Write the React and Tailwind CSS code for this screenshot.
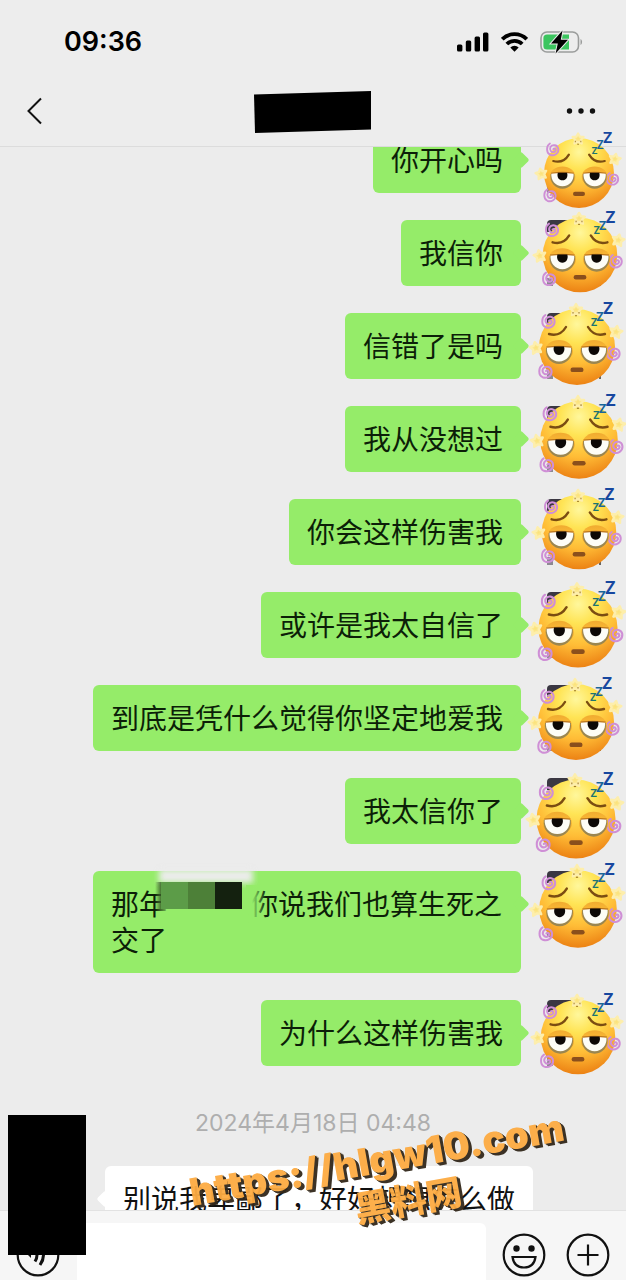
const MESSAGES = [
  { text: '你开心吗', sticker: { x: 5, y: 13, size: 92 } },
  { text: '我信你', sticker: { x: 6, y: 2, size: 98 } },
  { text: '信错了是吗', sticker: { x: 3, y: 1, size: 100 } },
  { text: '我从没想过', sticker: { x: 5, y: 1, size: 102 } },
  { text: '你会这样伤害我', sticker: { x: 5, y: 0, size: 98 } },
  { text: '或许是我太自信了', sticker: { x: 4, y: 3, size: 104 } },
  { text: '到底是凭什么觉得你坚定地爱我', sticker: { x: 2, y: 4, size: 100 } },
  { text: '我太信你了', sticker: { x: 2, y: 8, size: 104 } },
  { text: '那年', rest: '你说我们也算生死之交了', sticker: { x: 4, y: 5, size: 102 } },
  { text: '为什么这样伤害我', sticker: { x: 4, y: 4, size: 98 } }
];

const STAR = 'M0 -6 L2 -2.6 L6 -2.2 L3.2 1 L4 5 L0 3.4 L-4 5 L-3.2 1 L-6 -2.2 L-2 -2.6 Z';
const SWIRL = 'M0 0 C2 -2 4 1 1.6 2.8 C-1.6 4.6 -4.6 1 -3 -2.2 C-1 -5.6 5 -4.8 5.6 0 C6 5 1 7.8 -3.4 6.2 C-8 4 -7.6 -3.6 -3.6 -6';

function Eye({ x }) {
  return (
    <g transform={`translate(${x} 3)`}>
      <ellipse cx="0" cy="1" rx="14" ry="11" fill="url(#lid)" />
      <path d="M-13 -2 C-14 7 -8 14 0 14 C8 14 14 7 13 -2 Z" fill="#9a8650" />
      <path d="M-12 -3 H12 C13 5 7.5 11.5 0 11.5 C-7.5 11.5 -13 5 -12 -3 Z" fill="#fdfdf6" />
      <path d="M-12.5 -2.8 Q0 -4.6 12.5 -2.8" stroke="#b9741c" strokeWidth="1.2" fill="none" />
      <path d="M-5 -3.4 H5 C6.4 1 4 5 0 5 C-4 5 -6.4 1 -5 -3.4 Z" fill="#0d0906" />
    </g>
  );
}

function TiredFace() {
  return (
    <svg viewBox="-50 -50 100 100" className="block size-full overflow-visible" aria-hidden="true">
      <defs>
        <radialGradient id="face" cx="0.5" cy="0.2" r="0.8">
          <stop offset="0" stopColor="#fff79c" />
          <stop offset="0.3" stopColor="#ffe455" />
          <stop offset="0.65" stopColor="#ffbc36" />
          <stop offset="1" stopColor="#ec8214" />
        </radialGradient>
        <radialGradient id="star">
          <stop offset="0" stopColor="#fbe27a" />
          <stop offset="1" stopColor="#fdeea6" />
        </radialGradient>
        <linearGradient id="lid" x1="0" y1="0" x2="0" y2="1">
          <stop offset="0" stopColor="#f0ab30" />
          <stop offset="0.4" stopColor="#fbb935" />
          <stop offset="1" stopColor="#dd9220" />
        </linearGradient>
      </defs>
      <circle r="38" fill="url(#face)" />
      <g fill="url(#star)" stroke="#fdeeac" strokeWidth="2.4" strokeLinejoin="round">
        <path d={STAR} transform="translate(-1 -37)" />
        <path d={STAR} transform="translate(39 -15) rotate(12)" />
        <path d={STAR} transform="translate(-41 1) rotate(-12)" />
      </g>
      <path d="M-4 -35 v1.6 M2 -35 v1.6 M-2 -31.500 q1 1 2 0" stroke="#9a7426" strokeWidth="1" fill="none" />
      <g fill="none" stroke="#cf8fd6" strokeWidth="2" strokeLinecap="round">
        <path d={SWIRL} transform="translate(-28 -26)" />
        <path d={SWIRL} transform="translate(-31 24)" />
        <path d={SWIRL} transform="translate(37 6)" />
      </g>
      <g fill="none" stroke="#7b4d12" strokeWidth="2.400" strokeLinecap="round">
        <path d="M-28 -13 Q-17 -10 -11 -20" />
        <path d="M11 -20 Q17 -10 28 -13" />
      </g>
      <Eye x={-18} />
      <Eye x={17} />
      <rect x="-6.500" y="20.500" width="13" height="4.600" rx="2.200" fill="#8a4f1c" />
      <g className="font-['Inter',sans-serif] font-bold" textAnchor="middle">
        <text x="17" y="-21" fontSize="10" fill="#1d7470">Z</text>
        <text x="23" y="-26" fontSize="12" fill="#19659a">Z</text>
        <text x="31" y="-33" fontSize="16" fill="#17479f">Z</text>
      </g>
    </svg>
  );
}

function Avatar({ sticker }) {
  return (
    <div className="relative size-[66px] shrink-0">
      <div className="flex h-full flex-col justify-between px-1.5">
        <span className="h-3 w-6 rounded-tl-sm bg-[#3a3742]" />
        <span className="flex justify-between">
          <span className="h-2 w-1.5 bg-[#8d8992]" />
          <span className="h-2 w-0.5 bg-[#6a6560]" />
        </span>
      </div>
      <div
        className="absolute z-20 -translate-1/2"
        style={{ left: 33 + sticker.x, top: 33 + sticker.y, width: sticker.size, height: sticker.size }}
      >
        <TiredFace />
      </div>
    </div>
  );
}

// Mosaic over the hidden words, with the smear it leaves on both sides
function Censored() {
  return (
    <span className="relative inline-block h-7 w-[83px] align-middle">
      <span className="absolute -top-6 -left-2 h-3.5 w-[94px] bg-[#ececec] blur-[3px]" />
      <span className="absolute -top-2 -left-3 h-11 w-4 bg-linear-to-r from-transparent to-[#95ec69]" />
      <span className="absolute -top-[11px] -left-3 h-[27px] w-2 bg-linear-to-r from-transparent to-[#2c4a20]" />
      <span className="absolute -top-2 -right-4 h-10 w-5 bg-linear-to-l from-transparent to-[#95ec69] to-70%" />
      <span className="absolute -top-[11px] -left-1.5 flex">
        <span className="size-[27px] bg-[#5c9c48]" />
        <span className="size-[27px] bg-[#4d8038]" />
        <span className="size-[27px] bg-[#14210f]" />
      </span>
    </span>
  );
}

function Message({ message }) {
  return (
    <li className="flex items-start justify-end gap-5">
      <div className="relative max-w-[428px] rounded-md bg-[#95ec69] px-[18px] pt-3.5 pb-4">
        <span className="absolute top-[27px] -right-1.5 size-3 rotate-45 rounded-[2px] bg-[#95ec69]" />
        <p className="relative">
          {message.text}
          {message.rest && <Censored />}
          {message.rest}
        </p>
      </div>
      <Avatar sticker={message.sticker} />
    </li>
  );
}

function StatusBar() {
  return (
    <div className="flex h-[84px] items-center justify-between pr-[43px] pl-16">
      <time className="font-['Inter',sans-serif] text-[27px] font-semibold text-black">09:36</time>
      <div className="flex items-center gap-3">
        <svg width="32" height="20" viewBox="0 0 32 20" aria-label="signal">
          <rect x="0" y="12.5" width="5.4" height="7" rx="1.5" />
          <rect x="8.8" y="8.5" width="5.4" height="11" rx="1.5" />
          <rect x="17.6" y="4.5" width="5.4" height="15" rx="1.5" />
          <rect x="26" y="0.5" width="5.4" height="19" rx="1.5" />
        </svg>
        <svg width="27" height="20" viewBox="0 0 27 20" aria-label="wifi">
          <g fill="none" stroke="#000" strokeWidth="3.8">
            <path d="M1.3 7.2 A17.3 17.3 0 0 1 25.7 7.2" />
            <path d="M5.8 12 A10.9 10.9 0 0 1 21.2 12" />
          </g>
          <path d="M9.3 15.4 A6 6 0 0 1 17.7 15.4 L13.5 19.8 Z" />
        </svg>
        <svg width="43" height="24" viewBox="0 0 43 24" aria-label="battery charging">
          <rect x="1" y="2" width="37.5" height="20" rx="6" fill="none" stroke="#9b9d9c" strokeWidth="1.6" />
          <path d="M7 4.4 H29 V19.6 H7 A3.6 3.6 0 0 1 3.4 16 V8 A3.6 3.6 0 0 1 7 4.4 Z" fill="#3cc55f" />
          <path d="M40.5 9 C42.6 10 42.6 14 40.5 15 Z" fill="#9b9d9c" />
          <path d="M22.5 0.5 L11 13.6 H17.8 L15.6 23.5 L28 9.8 H20.8 Z" fill="#000" stroke="#ececec" strokeWidth="2" paintOrder="stroke" />
        </svg>
      </div>
    </div>
  );
}

function Header() {
  return (
    <header className="relative z-10 shrink-0 border-b border-[#dcdcdc] bg-[#ededed]">
      <StatusBar />
      <div className="flex h-[62px] items-start justify-between pr-[30px] pl-[26px]">
        <button type="button" aria-label="返回" className="mt-3 flex flex-1">
          <svg width="17" height="30" viewBox="0 0 17 30" fill="none" stroke="#111" strokeWidth="2">
            <path d="M15 2.5 L2.5 15 L15 27.5" />
          </svg>
        </button>
        <svg width="120" height="44" viewBox="0 0 120 44" className="mt-1.5" aria-hidden="true">
          <path d="M3 4.5 L120 1 L120 39.500 L4 43 Z" />
        </svg>
        <button type="button" aria-label="更多" className="mt-6 flex flex-1 justify-end">
          <svg width="30" height="6" viewBox="0 0 30 6" fill="#111">
            <circle cx="3.500" cy="3" r="2.700" />
            <circle cx="15" cy="3" r="2.700" />
            <circle cx="26.500" cy="3" r="2.700" />
          </svg>
        </button>
      </div>
    </header>
  );
}

function Footer() {
  return (
    <footer className="relative z-10 h-[70px] shrink-0 overflow-hidden border-t border-[#e2e2e2] bg-[#f6f6f6] pt-3">
      <div className="flex h-16 items-center pr-4 pl-4">
        <button type="button" aria-label="语音">
          <svg width="44" height="44" viewBox="0 0 44 44" fill="none" stroke="#111" strokeWidth="2.200">
            <circle cx="22" cy="22" r="20.300" />
            <path d="M19 15.500 Q23 22 19 28.500 M24 12 Q31 22 24 32" strokeWidth="3" />
            <path d="M11 21 L15 18 V25 Z" fill="#111" stroke="none" />
          </svg>
        </button>
        <input type="text" aria-label="消息" className="ml-[17px] h-full min-w-0 flex-1 rounded-md bg-white px-4 outline-none" />
        <button type="button" aria-label="表情" className="ml-4">
          <svg width="44" height="44" viewBox="0 0 44 44" fill="none" stroke="#111" strokeWidth="2.200">
            <circle cx="22" cy="22" r="20.300" />
            <circle cx="14.500" cy="15.500" r="3.200" fill="#111" stroke="none" />
            <circle cx="29.500" cy="15.500" r="3.200" fill="#111" stroke="none" />
            <path d="M10.500 24 H33.500 C32.500 31 28 34.500 22 34.500 C16 34.500 11.500 31 10.500 24 Z" />
          </svg>
        </button>
        <button type="button" aria-label="添加" className="ml-5">
          <svg width="44" height="44" viewBox="0 0 44 44" fill="none" stroke="#111" strokeWidth="2.200">
            <circle cx="22" cy="22" r="20.300" />
            <path d="M22 11.500 V32.500 M11.500 22 H32.500" />
          </svg>
        </button>
      </div>
    </footer>
  );
}

export default function App() {
  return (
    <div className="relative flex h-screen flex-col overflow-hidden bg-[#ececec] font-['Noto_Sans_CJK_SC',sans-serif] text-[28px] leading-9 text-[#0c1f08]">
      <Header />

      <main className="-mt-5 min-h-0 flex-1">
        <ul className="flex flex-col gap-[27px] pr-[19px] pl-[19px]">
          {MESSAGES.map((message, i) => (
            <Message key={i} message={message} />
          ))}
          <li className="pt-[18px] pb-1 text-center font-['Inter','Noto_Sans_CJK_SC',sans-serif] text-[23px] leading-6 text-[#aeaeae]">
            2024年4月18日 04:48
          </li>
          <li className="flex items-start gap-5">
            <div className="size-[66px] shrink-0" />
            <div className="relative max-w-[428px] rounded-md bg-white px-[18px] pt-3.5 pb-4 text-[#111]">
              <span className="absolute top-[27px] -left-1.5 size-3 rotate-45 rounded-[2px] bg-white" />
              <p>别说我卑鄙了，好好想想怎么做</p>
            </div>
          </li>
        </ul>
      </main>

      <Footer />

      <div className="absolute bottom-[25px] left-2 z-20 h-[140px] w-[78px] bg-black" />

      {/* Watermark */}
      <div className="absolute bottom-[52px] left-[191px] z-30 -rotate-[10deg] text-center font-['Inter','Noto_Sans_CJK_SC',sans-serif] text-[38px] leading-[46px] font-black whitespace-nowrap text-[#fdab42] opacity-95 [text-shadow:1px_1px_0_#33291c,2px_2px_0_#33291c,3px_3px_0_#33291c]">
        <p>https://hlgw10.com</p>
        <p className="pl-12 text-[36px]">黑料网</p>
      </div>
    </div>
  );
}
